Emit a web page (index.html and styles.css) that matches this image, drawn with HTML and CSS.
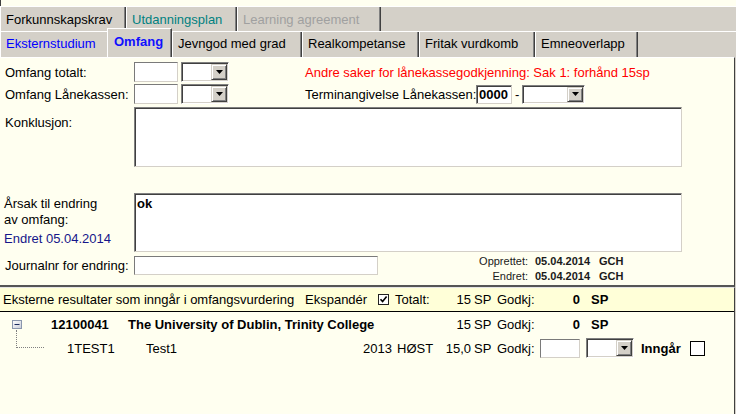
FILE: index.html
```html
<!DOCTYPE html>
<html lang="no">
<head>
<meta charset="utf-8">
<title>Omfang</title>
<link rel="stylesheet" href="styles.css">
</head>
<body>
<div class="strip"></div>

<div class="tabrow tabrow-top">
  <div class="tab tab-forkunn">Forkunnskapskrav</div>
  <div class="tab tab-teal tab-utd">Utdanningsplan</div>
  <div class="tab tab-disabled tab-learn">Learning agreement</div>
</div>

<div class="tabrow tabrow-main">
  <div class="tab tab-blue tab-ekst">Eksternstudium</div>
  <div class="tab tab-active tab-omf">Omfang</div>
  <div class="tab tab-jevn">Jevngod med grad</div>
  <div class="tab tab-real">Realkompetanse</div>
  <div class="tab tab-fritak">Fritak vurdkomb</div>
  <div class="tab tab-emne">Emneoverlapp</div>
</div>

<div class="panel">
  <div class="frow frow-a">
    <div class="flabel">Omfang totalt:</div>
    <div class="txt txt-small"></div>
    <div class="select select-small"><div class="select-btn"><svg class="caret" width="7" height="4" viewBox="0 0 7 4"><polygon points="0,0 7,0 3.5,4" fill="#000"/></svg></div></div>
    <div class="note">Andre saker for lånekassegodkjenning: Sak 1: forhånd 15sp</div>
  </div>
  <div class="frow frow-b">
    <div class="flabel">Omfang Lånekassen:</div>
    <div class="txt txt-small"></div>
    <div class="select select-small"><div class="select-btn"><svg class="caret" width="7" height="4" viewBox="0 0 7 4"><polygon points="0,0 7,0 3.5,4" fill="#000"/></svg></div></div>
    <div class="term-label">Terminangivelse Lånekassen:</div>
    <div class="year-input">0000</div>
    <div class="dash">-</div>
    <div class="select select-term"><div class="select-btn"><svg class="caret" width="7" height="4" viewBox="0 0 7 4"><polygon points="0,0 7,0 3.5,4" fill="#000"/></svg></div></div>
  </div>
  <div class="frow frow-c">
    <div class="flabel flabel-top">Konklusjon:</div>
    <textarea class="area area-konk"></textarea>
  </div>
  <div class="frow frow-d">
    <div class="flabel flabel-stack">
      <div>Årsak til endring</div>
      <div>av omfang:</div>
      <div class="changed">Endret 05.04.2014</div>
    </div>
    <textarea class="area area-arsak">ok</textarea>
  </div>
  <div class="frow frow-e">
    <div class="flabel flabel-journ">Journalnr for endring:</div>
    <div class="txt txt-journ"></div>
    <div class="meta">
      <div class="meta-label">Opprettet:</div>
      <div class="meta-val">05.04.2014</div>
      <div class="meta-val">GCH</div>
      <div class="meta-label">Endret:</div>
      <div class="meta-val">05.04.2014</div>
      <div class="meta-val">GCH</div>
    </div>
  </div>
</div>

<div class="results">
  <div class="rhead">
    <div class="c-title">Eksterne resultater som inngår i omfangsvurdering</div>
    <div class="c-exp">Ekspandér</div>
    <svg class="chk" width="11" height="11" viewBox="0 0 11 11"><rect x="0.5" y="0.5" width="10" height="10" fill="#fff" stroke="#222"/><path d="M2.5 5.2 L4.6 7.6 L8.6 2.6" fill="none" stroke="#000" stroke-width="1.6"/></svg>
    <div class="c-tot">Totalt:</div>
    <div class="c-num">15</div>
    <div class="c-unit">SP</div>
    <div class="c-gk">Godkj:</div>
    <div class="c-gv">0</div>
    <div class="c-gu">SP</div>
  </div>
  <div class="rrow">
    <div class="c-icon"><svg width="10" height="9" viewBox="0 0 10 9"><defs><linearGradient id="g" x1="0" y1="0" x2="1" y2="1"><stop offset="0" stop-color="#ffffff"/><stop offset="1" stop-color="#c8ccd8"/></linearGradient></defs><rect x="0.5" y="0.5" width="9" height="8" fill="url(#g)" stroke="#8a96ad"/><line x1="2.5" y1="4.5" x2="7.5" y2="4.5" stroke="#1a2a5e"/></svg></div>
    <div class="c-code">12100041</div>
    <div class="c-name">The University of Dublin, Trinity College</div>
    <div class="c-num">15</div>
    <div class="c-unit">SP</div>
    <div class="c-gk">Godkj:</div>
    <div class="c-gv">0</div>
    <div class="c-gu">SP</div>
  </div>
  <div class="rrow">
    <div class="c-tree"><div class="tree-line"></div></div>
    <div class="c-course">1TEST1</div>
    <div class="c-ctitle">Test1</div>
    <div class="c-year">2013</div>
    <div class="c-term">HØST</div>
    <div class="c-num">15,0</div>
    <div class="c-unit">SP</div>
    <div class="c-gk">Godkj:</div>
    <div class="txt txt-gk"></div>
    <div class="select select-gk"><div class="select-btn"><svg class="caret" width="7" height="4" viewBox="0 0 7 4"><polygon points="0,0 7,0 3.5,4" fill="#000"/></svg></div></div>
    <div class="incl">Inngår</div>
    <div class="box"></div>
  </div>
</div>
</body>
</html>
```

FILE: styles.css
```css
* { box-sizing: border-box; }
html, body { margin: 0; padding: 0; }
body {
  width: 736px;
  height: 414px;
  overflow: hidden;
  background: #d4d0c8;
  font-family: "Liberation Sans", Arial, sans-serif;
  font-size: 13px;
  line-height: 15px;
  color: #000;
}

.strip {
  height: 6px;
  background: #fffff0;
  border-left: 1px solid #404040;
}

/* tabs */
.tabrow {
  display: flex;
  background: #d4d0c8;
  border-top: 1px solid #fff;
}
.tabrow-top { height: 25px; }
.tabrow-main { height: 26px; }
.tab {
  flex: none;
  display: flex;
  align-items: center;
  padding-left: 5px;
  border-left: 1px solid #fff;
  border-right: 1px solid #404040;
  box-shadow: inset -1px 0 #808080;
  white-space: nowrap;
  background: #d4d0c8;
}
.tabrow-main .tab { padding-bottom: 2px; }
.tab-forkunn { width: 126px; }
.tab-utd { width: 111px; }
.tab-learn { width: 144px; }
.tab-ekst { width: 107px; border-right: none; box-shadow: none; }
.tab-omf { width: 65px; }
.tab-jevn { width: 130px; }
.tab-real { width: 117px; }
.tab-fritak { width: 116px; }
.tab-emne { width: 103px; }
.tab-teal { color: #008080; }
.tab-disabled { color: #a0a0a0; }
.tab-blue { color: #0000ff; }
.tabrow-main .tab-active {
  margin-top: -4px;
  height: 29px;
  border-top: 1px solid #fff;
  padding-left: 6px;
  padding-bottom: 4px;
  font-weight: bold;
  color: #1010ff;
}

/* panel */
.panel {
  width: 735px;
  height: 230px;
  background: #fffff0;
  border-top: 1px solid #fff;
  border-right: 1px solid #404040;
  border-bottom: 2px solid #555;
  padding-top: 4px;
  display: flex;
  flex-direction: column;
}
.frow { display: flex; align-items: center; white-space: nowrap; }
.frow-a { height: 20px; }
.frow-b { height: 20px; margin-top: 2px; }
.frow-c { align-items: flex-start; margin-top: 3px; }
.frow-d { align-items: flex-start; margin-top: 26px; }
.frow-e { align-items: flex-start; margin-top: 4px; }
.flabel { flex: none; width: 134px; padding-left: 5px; }
.flabel-top { padding-top: 8px; }
.flabel-stack { padding-top: 3px; line-height: 16px; padding-left: 4px; }
.changed { margin-top: 3px; color: #16168a; }
.flabel-journ { padding-top: 2px; }

.txt {
  flex: none;
  background: #fff;
  border: 1px solid;
  border-color: #7a7a7a #d4d0c8 #d4d0c8 #7a7a7a;
}
.txt-small { width: 44px; height: 20px; }
.txt-journ { width: 244px; height: 19px; }
.txt-gk { width: 40px; height: 19px; }

.select {
  flex: none;
  display: flex;
  justify-content: flex-end;
  background: #fff;
  border: 1px solid;
  border-color: #808080 #fff #fff #808080;
  box-shadow: inset 1px 1px #404040, inset -1px -1px #d4d0c8;
  padding: 1px;
}
.select-small { width: 48px; height: 20px; margin-left: 3px; }
.select-term { width: 63px; height: 19px; margin-left: 3px; }
.select-gk { width: 48px; height: 20px; margin-left: 6px; }
.select-btn {
  width: 16px;
  background: #d4d0c8;
  border: 1px solid;
  border-color: #d4d0c8 #404040 #404040 #d4d0c8;
  box-shadow: inset 1px 1px #fff, inset -1px -1px #808080;
  display: flex;
  align-items: center;
  justify-content: center;
}
.caret { display: block; }

.note { margin-left: 76px; color: #ff0000; }
.term-label { margin-left: 76px; width: 171px; flex: none; }
.year-input {
  flex: none;
  width: 36px;
  height: 19px;
  background: #fff;
  border: 1px solid;
  border-color: #808080 #d4d0c8 #d4d0c8 #808080;
  box-shadow: inset 1px 1px #404040;
  font-weight: bold;
  padding: 1px 0 0 2px;
}
.dash { margin-left: 3px; }

.area {
  flex: none;
  display: block;
  margin: 0;
  resize: none;
  overflow: hidden;
  background: #fff;
  border: 1px solid;
  border-color: #808080 #d4d0c8 #d4d0c8 #808080;
  box-shadow: inset 1px 1px #404040;
  font-family: "Liberation Sans", Arial, sans-serif;
  font-size: 13px;
  line-height: 15px;
  font-weight: bold;
  color: #000;
  padding: 2px 2px;
  outline: none;
}
.area-konk { width: 548px; height: 60px; }
.area-arsak { width: 548px; height: 59px; }

.meta {
  margin-left: 62px;
  margin-top: -2px;
  display: grid;
  grid-template-columns: 88px 64px auto;
  font-size: 11px;
  line-height: 15px;
  color: #1a1a1a;
}
.meta-label { text-align: right; }
.meta-val { padding-left: 7px; font-weight: bold; }

/* results */
.results {
  width: 735px;
  height: 127px;
  background: #fffff0;
  border-top: 1px solid #e4e4e4;
  border-right: 1px solid #404040;
}
.rhead {
  display: flex;
  align-items: center;
  height: 24px;
  background: #ffffd8;
  border-bottom: 1px solid #000;
  white-space: nowrap;
}
.rrow {
  display: flex;
  align-items: center;
  height: 24px;
  white-space: nowrap;
}
.c-title { flex: none; width: 305px; padding-left: 3px; }
.c-exp { flex: none; width: 73px; }
.chk { flex: none; display: block; margin-right: 6px; }
.c-tot { flex: none; width: 45px; }
.c-num { flex: none; width: 31px; text-align: right; }
.c-unit { flex: none; width: 26px; padding-left: 3px; }
.c-gk { flex: none; width: 43px; }
.c-gv { flex: none; width: 40px; text-align: right; font-weight: bold; }
.c-gu { flex: none; padding-left: 11px; font-weight: bold; }

.c-icon { flex: none; width: 51px; padding-left: 12px; display: flex; align-items: center; }
.c-icon svg { display: block; }
.c-code { flex: none; width: 77px; font-weight: bold; }
.c-name { flex: none; width: 312px; font-weight: bold; }

.c-tree { flex: none; width: 67px; align-self: stretch; }
.tree-line {
  margin-left: 16px;
  margin-top: -6px;
  width: 28px;
  height: 18px;
  border-left: 1px dotted #808080;
  border-bottom: 1px dotted #808080;
}
.c-course { flex: none; width: 79px; }
.c-ctitle { flex: none; width: 217px; }
.c-year { flex: none; width: 34px; }
.c-term { flex: none; width: 43px; }
.incl { margin-left: 7px; font-weight: bold; }
.box {
  flex: none;
  margin-left: 9px;
  width: 15px;
  height: 15px;
  background: #fff;
  border: 1px solid #000;
}
```
